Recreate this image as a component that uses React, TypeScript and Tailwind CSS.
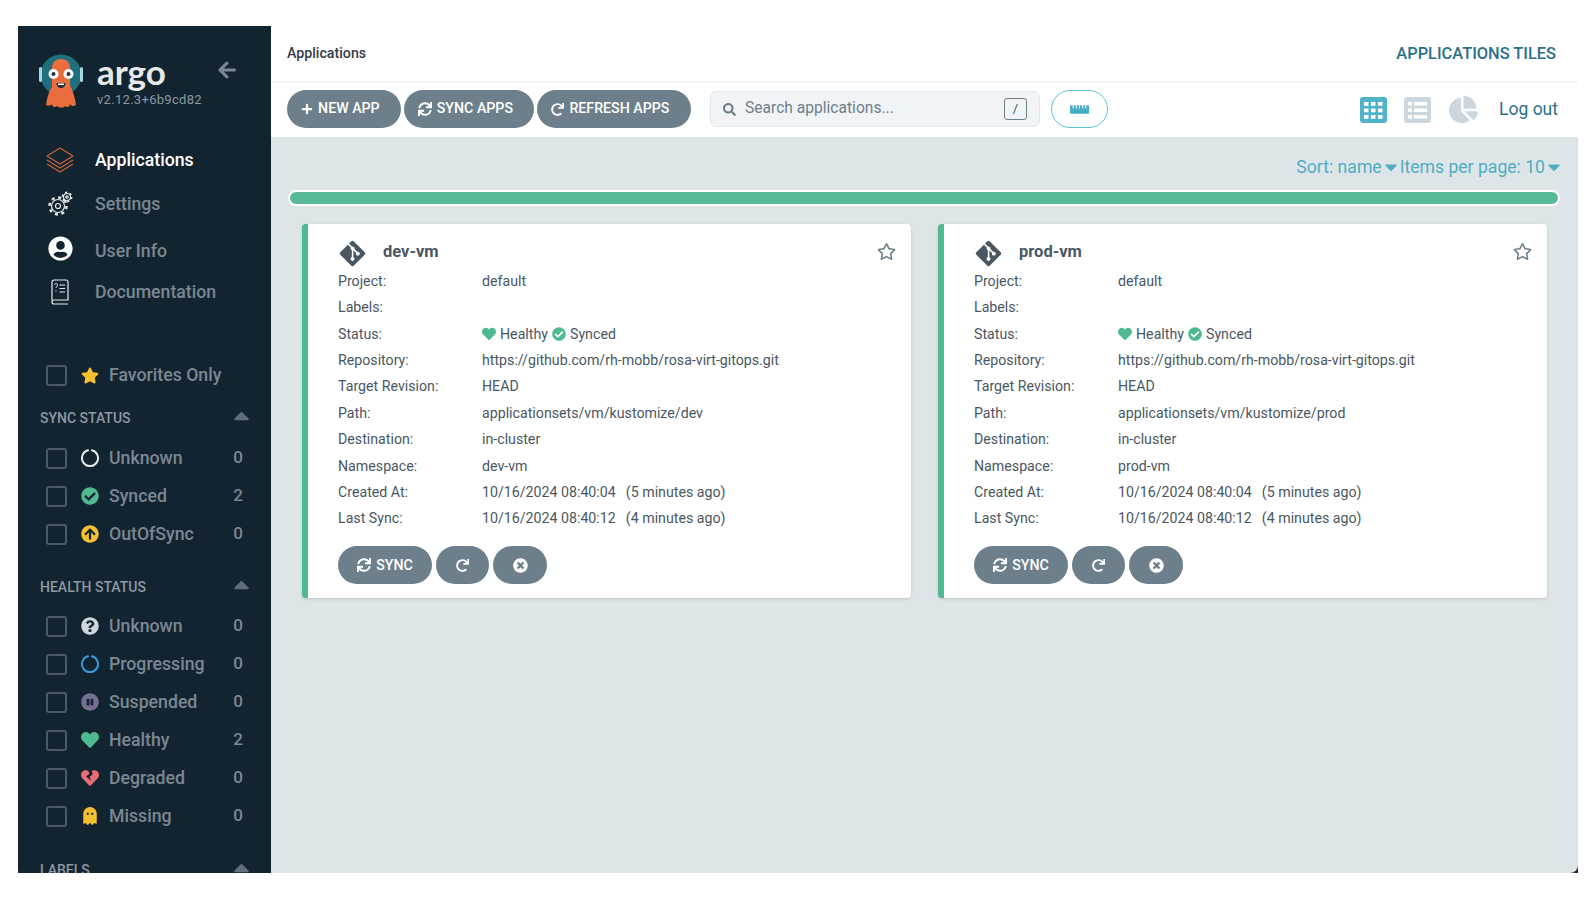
import type { ReactNode } from "react";
import {
  FaArrowCircleUp,
  FaArrowLeft,
  FaCaretDown,
  FaCaretUp,
  FaChartPie,
  FaCheckCircle,
  FaGhost,
  FaGitAlt,
  FaHeart,
  FaHeartBroken,
  FaPauseCircle,
  FaPlus,
  FaQuestionCircle,
  FaRedo,
  FaRegStar,
  FaRulerHorizontal,
  FaSearch,
  FaStar,
  FaSync,
  FaTimesCircle,
  FaUserCircle,
} from "react-icons/fa";

function Mascot() {
  return (
    <svg width="46" height="58" viewBox="0 0 46 58">
      <circle cx="23" cy="22" r="20.5" fill="#1f6f7d" />
      <rect x="1" y="14" width="3" height="15" rx="1.5" fill="#a9d6e5" />
      <rect x="42" y="14" width="3" height="15" rx="1.5" fill="#a9d6e5" />
      <path d="M14 32V15c0-6 4-9 9-9s9 3 9 9v17c3 6 5 13 6 20-3 2-5 1-6-1 0 3-3 4-5 2-1 2-6 2-8 0-2 2-5 1-5-2-1 2-4 2-6 1 1-7 3-14 6-18z" fill="#e96d3f" />
      <circle cx="15.5" cy="21" r="5" fill="#fff" />
      <circle cx="30.5" cy="21" r="5" fill="#fff" />
      <circle cx="15.5" cy="21" r="2" fill="#23323d" />
      <circle cx="30.5" cy="21" r="2" fill="#23323d" />
      <path d="M18.5 30h9c0 3-2 5-4.5 5s-4.5-2-4.5-5z" fill="#23323d" />
      <path d="M20 30.5h6v1.5h-6z" fill="#fff" />
    </svg>
  );
}

function LayersIcon() {
  return (
    <svg width="28" height="28" viewBox="0 0 28 28" fill="none" stroke="#c4623a" strokeWidth="1.4" strokeLinejoin="round">
      <path d="M14 2 27 10 14 18 1 10z" />
      <path d="M1 14l13 8 13-8" />
      <path d="M1 18l13 8 13-8" />
    </svg>
  );
}

function GearsIcon() {
  return (
    <svg width="26" height="26" viewBox="0 0 26 26" fill="none" stroke="#e5e8ea" strokeWidth="1.2">
      <circle cx="11" cy="15" r="6.5" />
      <circle cx="11" cy="15" r="2.5" />
      <circle cx="11" cy="15" r="8.5" strokeWidth="2.5" strokeDasharray="3 3.67" />
      <circle cx="20" cy="6" r="3.5" fill="#132431" />
      <circle cx="20" cy="6" r="1.2" />
      <circle cx="20" cy="6" r="4.5" strokeWidth="1.8" strokeDasharray="2 2.7" />
    </svg>
  );
}

function BookIcon() {
  return (
    <svg width="20" height="26" viewBox="0 0 20 26" fill="none" stroke="#e5e8ea" strokeWidth="1.2">
      <path d="M2 22V3a2 2 0 0 1 2-2h12a2 2 0 0 1 2 2v18H4a2 2 0 0 0 0 4h14" />
      <path d="M9.5 6H15M9.5 9.5H15M9.5 13H15" />
      <path d="M4.5 6c0-2 3-2 3 0 0 1.5-1.5 1.5-1.5 3M6 11.5v1" strokeWidth="1" />
    </svg>
  );
}

function Ring({ color }: { color: string }) {
  return (
    <svg width="18" height="18" viewBox="0 0 18 18" fill="none" stroke={color} strokeWidth="2">
      <path d="M7 1.3A8 8 0 1 0 11 1.3" strokeLinecap="round" />
    </svg>
  );
}

// the tile and list view switches: a rounded block with holes cut out
function GridViewIcon({ color }: { color: string }) {
  const cells = [];
  for (let r = 0; r < 3; r++) {
    for (let c = 0; c < 3; c++) {
      cells.push(<rect key={`${r}-${c}`} x={4 + c * 7} y={5 + r * 6.5} width="4.5" height="3.8" fill="#fff" />);
    }
  }
  return (
    <svg width="27" height="26" viewBox="0 0 27 26">
      <rect width="27" height="26" rx="3" fill={color} />
      {cells}
    </svg>
  );
}

function ListViewIcon({ color }: { color: string }) {
  return (
    <svg width="27" height="26" viewBox="0 0 27 26">
      <rect width="27" height="26" rx="3" fill={color} />
      {[5, 11.5, 18].map((y) => (
        <g key={y} fill="#fff">
          <rect x="4" y={y} width="4" height="3.5" />
          <rect x="10" y={y} width="13" height="3.5" />
        </g>
      ))}
    </svg>
  );
}

function NavItem({ icon, label, h, active }: { icon: ReactNode; label: string; h: string; active?: boolean }) {
  return (
    <div className={`flex items-center ${h}`}>
      <div className="flex w-[77px] justify-center pl-[7px]">{icon}</div>
      <span className={`text-[17.7px] font-medium ${active ? "text-white" : "text-[#7b8791]"}`}>{label}</span>
    </div>
  );
}

function FilterRow({ icon, label, count }: { icon?: ReactNode; label: string; count?: number }) {
  return (
    <div className="flex h-[38px] items-center pl-[28px] pr-[28px]">
      <span className="h-[21px] w-[21px] shrink-0 rounded-[3px] border-2 border-[#4a5965]" />
      <span className="ml-[14px] flex w-[18px] shrink-0 justify-center">{icon}</span>
      <span className="ml-[10px] flex-1 text-[17.7px] font-medium text-[#7b8791]">{label}</span>
      {count !== undefined && <span className="text-[17px] font-medium text-[#7b8791]">{count}</span>}
    </div>
  );
}

function SectionHead({ label, className }: { label: string; className: string }) {
  return (
    <div className={`flex h-[20px] shrink-0 items-center justify-between pl-[22px] pr-[17px] ${className}`}>
      <span className="text-[14px] font-medium text-[#8d98a1]">{label}</span>
      <FaCaretUp className="-mt-[5px] text-[#5f6e7a]" size={25} />
    </div>
  );
}

function Sidebar() {
  return (
    <aside className="w-[253px] shrink-0 overflow-hidden rounded-bl-[6px] bg-[#132431]">
      <div className="flex h-[112px] pl-[20px] pt-[27px]">
        <Mascot />
        <div className="ml-[13px] flex flex-col">
          <span className="font-[Lato,sans-serif] text-[35px] font-bold leading-[36px] text-[#e6e8ea]">argo</span>
          <span className="mt-[3px] text-[13px] leading-[16px] tracking-[0.3px] text-[#8d98a1]">v2.12.3+6b9cd82</span>
        </div>
        <FaArrowLeft className="ml-[15px] mt-[7px] text-[#7b8791]" size={20} />
      </div>
      <NavItem icon={<LayersIcon />} label="Applications" h="h-[44px]" active />
      <NavItem icon={<GearsIcon />} label="Settings" h="h-[44px]" />
      <NavItem icon={<FaUserCircle className="-mt-[5px] text-white" size={25} />} label="User Info" h="h-[50px]" />
      <NavItem icon={<BookIcon />} label="Documentation" h="h-[32px]" />

      <div className="mt-[48px]">
        <FilterRow icon={<FaStar className="text-[#f4c030]" size={19} />} label="Favorites Only" />
      </div>

      <SectionHead label="SYNC STATUS" className="mt-[14px]" />
      <div className="mt-[11px]">
        <FilterRow icon={<Ring color="#e5e8ea" />} label="Unknown" count={0} />
        <FilterRow icon={<FaCheckCircle className="text-[#4fb990]" size={18} />} label="Synced" count={2} />
        <FilterRow icon={<FaArrowCircleUp className="text-[#f4c030]" size={18} />} label="OutOfSync" count={0} />
      </div>

      <SectionHead label="HEALTH STATUS" className="mt-[24px]" />
      <div className="mt-[10px]">
        <FilterRow icon={<FaQuestionCircle className="text-[#ccd6dd]" size={18} />} label="Unknown" count={0} />
        <FilterRow icon={<Ring color="#3a9ad9" />} label="Progressing" count={0} />
        <FilterRow icon={<FaPauseCircle className="text-[#766f94]" size={18} />} label="Suspended" count={0} />
        <FilterRow icon={<FaHeart className="text-[#4fb990]" size={18} />} label="Healthy" count={2} />
        <FilterRow icon={<FaHeartBroken className="text-[#e96d76]" size={18} />} label="Degraded" count={0} />
        <FilterRow icon={<FaGhost className="text-[#f4c030]" size={18} />} label="Missing" count={0} />
      </div>

      <SectionHead label="LABELS" className="mt-[25px]" />
    </aside>
  );
}

function ToolButton({ icon, label, w }: { icon: ReactNode; label: string; w: string }) {
  return (
    <button className={`flex h-[38px] items-center justify-center gap-[5px] rounded-[19px] bg-[#6d7f8b] text-[14.2px] font-medium text-white ${w}`}>
      {icon}
      {label}
    </button>
  );
}

const ROWS = (name: string, path: string) => [
  ["Project:", "default"],
  ["Labels:", ""],
  ["Status:", "status"],
  ["Repository:", "https://github.com/rh-mobb/rosa-virt-gitops.git"],
  ["Target Revision:", "HEAD"],
  ["Path:", path],
  ["Destination:", "in-cluster"],
  ["Namespace:", name],
  ["Created At:", "10/16/2024 08:40:04\u2002\u2009(5 minutes ago)"],
  ["Last Sync:", "10/16/2024 08:40:12\u2002\u2009(4 minutes ago)"],
];

function AppCard({ name, path }: { name: string; path: string }) {
  return (
    <div className="h-[374px] rounded-[4px] border-l-[6px] border-[#4fb990] bg-white pl-[30px] pr-[15px] shadow-[0_1px_3px_rgba(0,0,0,0.15)]">
      <div className="flex h-[44.3px] items-center pt-[11px]">
        <FaGitAlt className="mt-[3px] text-[#495763]" size={29} />
        <span className="ml-[16px] mt-[1px] flex-1 text-[16.5px] font-bold text-[#495763]">{name}</span>
        <FaRegStar className="-mt-[1px] text-[#6d7f8b]" size={19} />
      </div>
      {ROWS(name, path).map(([label, value]) => (
        <div key={label} className="flex h-[26.4px] items-center text-[14.2px] text-[#495763]">
          <span className="w-[144px] shrink-0">{label}</span>
          {value === "status" ? (
            <span className="flex items-center">
              <FaHeart className="text-[#4fb990]" size={14} />
              <span className="ml-[4px]">Healthy</span>
              <FaCheckCircle className="ml-[4px] text-[#4fb990]" size={14} />
              <span className="ml-[4px]">Synced</span>
            </span>
          ) : (
            <span className="whitespace-pre">{value}</span>
          )}
        </div>
      ))}
      <div className="mt-[14px] flex gap-[4px]">
        <ToolButton icon={<FaSync size={14} />} label="SYNC" w="w-[94px]" />
        <ToolButton icon={<FaRedo size={13} />} label="" w="w-[53px]" />
        <ToolButton icon={<FaTimesCircle size={15} />} label="" w="w-[54px]" />
      </div>
    </div>
  );
}

export default function App() {
  return (
    <div className="h-[904px] bg-white pb-[31px] pl-[18px] pr-[16px] pt-[26px] font-[Roboto,sans-serif]">
      <div className="flex h-full bg-[#1d2f4d]">
        <Sidebar />
        <main className="flex min-w-0 flex-1 flex-col overflow-hidden rounded-br-[8px] bg-[#dee5e9]">
          <header className="flex h-[57px] shrink-0 items-center justify-between border-b-2 border-[#f1f4f6] bg-white pl-[16px] pr-[22px]">
            <span className="text-[14.2px] font-medium text-[#363c4a]">Applications</span>
            <span className="mt-[1px] text-[16.4px] font-medium text-[#2b7089]">APPLICATIONS TILES</span>
          </header>
          <div className="flex h-[54px] shrink-0 items-start bg-white pl-[16px] pr-[20px] pt-[7px]">
            <div className="flex gap-[3px]">
              <ToolButton icon={<FaPlus size={12} />} label={"NEW APP\u2002"} w="w-[114px]" />
              <ToolButton icon={<FaSync size={14} />} label={"SYNC APPS\u2002"} w="w-[130px]" />
              <ToolButton icon={<FaRedo size={13} />} label={"REFRESH APPS\u2002"} w="w-[154px]" />
            </div>
            <div className="ml-[19px] mt-[1px] flex h-[36px] w-[330px] items-center rounded-[6px] border border-[#e3e8ec] bg-[#f1f4f6] pl-[12px] pr-[12px]">
              <FaSearch className="text-[#6d7f8b]" size={13} />
              <span className="ml-[9px] flex-1 text-[15.6px] text-[#6d7f8b]">Search applications...</span>
              <span className="flex h-[22px] w-[23px] items-center justify-center rounded-[3px] border border-[#6d7f8b] text-[13px] text-[#495763]">/</span>
            </div>
            <button className="ml-[11px] flex h-[38px] w-[57px] items-center justify-center rounded-[19px] border border-[#5fc0d6]">
              <FaRulerHorizontal className="text-[#45aec4]" size={19} />
            </button>
            <div className="ml-auto mt-[5px] flex items-center">
              <GridViewIcon color="#4fb3ca" />
              <span className="ml-[17px]">
                <ListViewIcon color="#ccd6dd" />
              </span>
              <FaChartPie className="ml-[18px] text-[#ccd6dd]" size={29} />
              <span className="-mt-[1px] ml-[21px] text-[17.5px] text-[#2b7089]">Log out</span>
            </div>
          </div>
          <div className="flex-1 pl-[17px] pr-[18px] pt-[18px]">
            <div className="flex h-[24px] items-center justify-end text-[17.6px] text-[#4faec0]">
              <span>Sort: name</span>
              <FaCaretDown className="-mx-[1px]" size={20} />
              <span>Items per page: 10</span>
              <FaCaretDown className="-ml-[1px] -mr-[4px]" size={20} />
            </div>
            <div className="mt-[11px] h-[16px] rounded-[8px] border-2 border-white bg-[#57b997]" />
            <div className="mt-[18px] grid grid-cols-2 gap-[27px] pl-[14px] pr-[13px]">
              <AppCard name="dev-vm" path="applicationsets/vm/kustomize/dev" />
              <AppCard name="prod-vm" path="applicationsets/vm/kustomize/prod" />
            </div>
          </div>
        </main>
      </div>
    </div>
  );
}
